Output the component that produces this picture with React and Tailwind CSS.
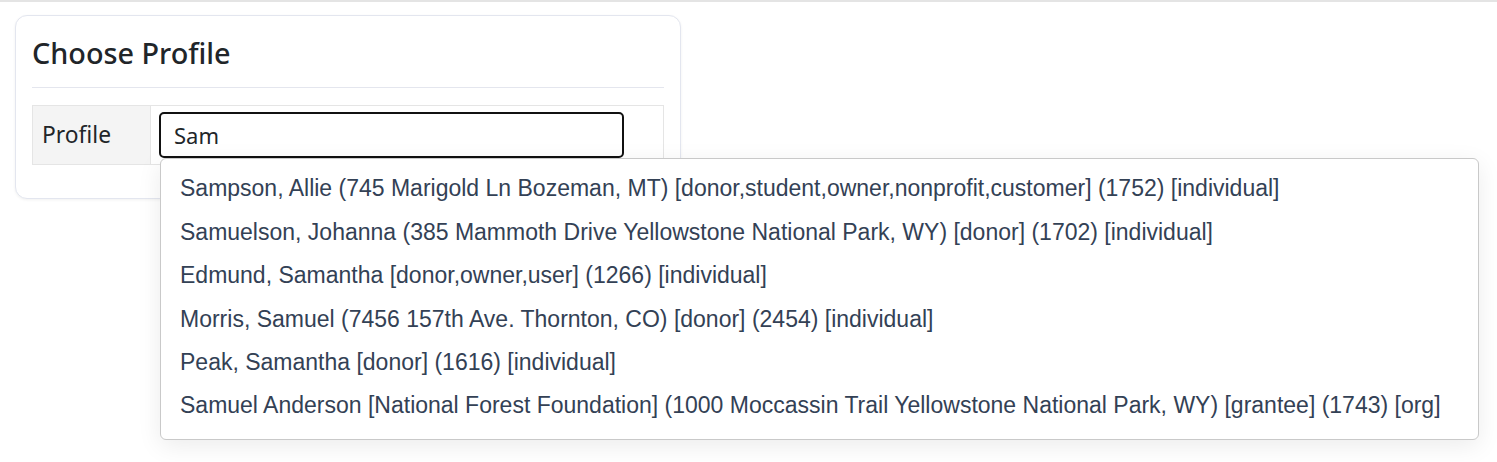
export default function App() {
  const items = [
    "Sampson, Allie (745 Marigold Ln Bozeman, MT) [donor,student,owner,nonprofit,customer] (1752) [individual]",
    "Samuelson, Johanna (385 Mammoth Drive Yellowstone National Park, WY) [donor] (1702) [individual]",
    "Edmund, Samantha [donor,owner,user] (1266) [individual]",
    "Morris, Samuel (7456 157th Ave. Thornton, CO) [donor] (2454) [individual]",
    "Peak, Samantha [donor] (1616) [individual]",
    "Samuel Anderson [National Forest Foundation] (1000 Moccassin Trail Yellowstone National Park, WY) [grantee] (1743) [org]",
  ];
  return (
    <div className="w-[1497px] h-[462px] bg-white overflow-hidden relative" style={{ fontFamily: "'Noto Sans', sans-serif" }}>
      <div className="h-[2px] bg-[#e4e4e4]" />
      <div className="pl-[15px] pt-[13px]">
        <div className="w-[666px] rounded-[12px] border border-[#e3e6ef] bg-white shadow-[0_1px_3px_rgba(0,0,0,0.06)] px-4 pt-[18px] pb-[33px]">
          <h3 className="text-[28.8px] leading-[38px] font-medium text-[#212529]">Choose Profile</h3>
          <div className="h-px bg-[#e4e6ee] mt-[15px] mb-[17px]" />
          <div className="flex border border-[#e5e5e5] h-[60px]">
            <div className="w-[118px] bg-[#f4f4f4] border-r border-[#e5e5e5] flex items-center pl-[9px] text-[22.8px] text-[#212529]">Profile</div>
            <div className="flex-1 relative pl-[8px] pt-[6px]">
              <div className="w-[465px] h-[46px] border-2 border-[#111] rounded-[5px] flex items-center pl-[13px] text-[22px] text-[#212529]">Sam</div>
              <div
                className="absolute left-[9px] top-[52px] w-[1319px] h-[282px] bg-white border border-[#c9c9c9] rounded-[6px] shadow-[0_6px_24px_rgba(0,0,0,0.08)] pt-[8px] z-10"
                style={{ fontFamily: "'Liberation Sans', Arial, sans-serif" }}
              >
                {items.map((t) => (
                  <div key={t} className="h-[43.4px] flex items-center pl-[19px] text-[23px] text-[#334155] whitespace-nowrap">{t}</div>
                ))}
              </div>
            </div>
          </div>
        </div>
      </div>
    </div>
  );
}
